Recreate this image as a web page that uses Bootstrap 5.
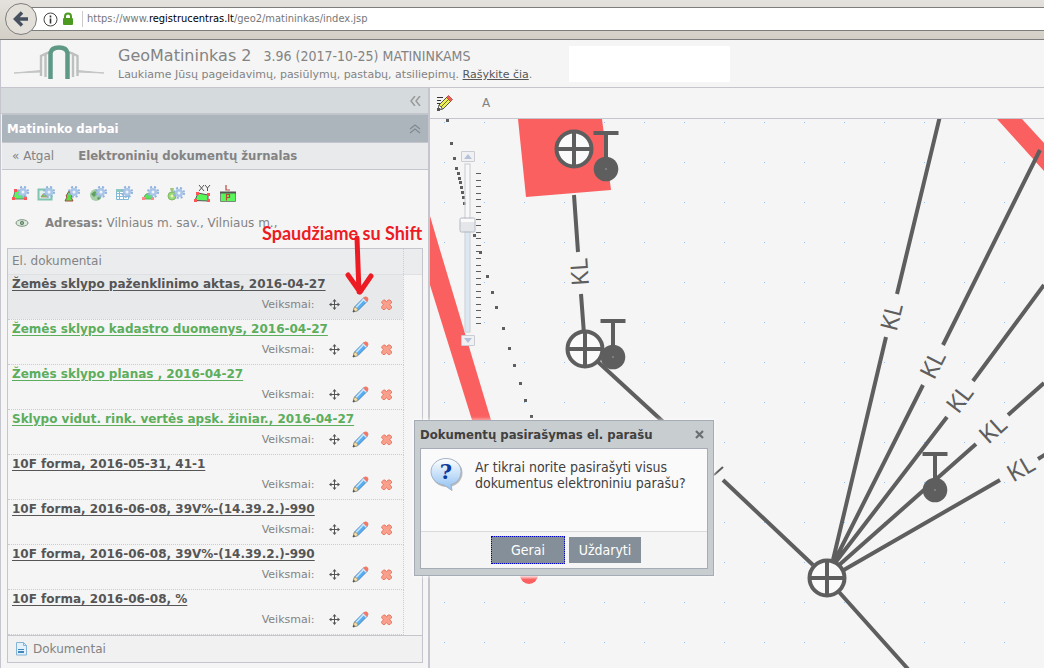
<!DOCTYPE html>
<html lang="lt">
<head>
<meta charset="utf-8">
<meta name="viewport" content="width=device-width, initial-scale=1">
<title>GeoMatininkas 2</title>
<link href="https://cdn.jsdelivr.net/npm/bootstrap@5.3.0/dist/css/bootstrap.min.css" rel="stylesheet">
<style>
body{font-family:"DejaVu Sans",sans-serif;font-size:12px;line-height:16px;color:#838383;background:#f5f5f5}
.narrow{font-family:"DejaVu Sans Condensed","DejaVu Sans",sans-serif}
.plain{background:none;border:0;padding:0;color:inherit}
.chrome{height:40px;padding-top:7px;background:linear-gradient(#e4e2dd,#d3cfc6);border-bottom:1px solid #7d7d7d}
.addr{height:24px;margin-left:30px;padding-left:12px;background:#fff;border:1px solid #7d7d7d;border-right:0}
.addr i{width:1px;height:16px;background:#ccc}
.url{font-size:11px;color:#777}
.url b{font-weight:400;color:#000}
.back{left:4px;top:2px;z-index:2}
.masthead{height:48px;border-bottom:1px solid #c5c6cd;border-left:1px solid #c5c6cd}
.logo{width:117px}
.appname{font-size:16px}
.version{font-size:14px;margin-left:12px}
.note{font-size:11px;line-height:14px}
.note a{color:#555}
.whitebox{left:569px;top:46px;width:161px;height:36px;background:#fff}
.side{width:430px;border-left:1px solid #c5c6cd;border-right:2px solid #c5c6cd}
.collapse-bar{height:26px;background:#d5dadd;border-bottom:1px solid #c5c6cd;padding-right:7px}
.paneltitle{height:28px;margin-left:1px;background:#adb5bc;border-top:1px solid #c0c5cb;color:#fff;font-size:13px;font-weight:700;padding:0 7px 0 5px}
.crumbs{height:28px;margin-left:1px;background:#e9eaec;border-top:1px solid #c5c6cd;border-bottom:1px solid #c5c6cd;padding-left:10px}
.crumbs a{color:#838383;text-decoration:none}
.crumbs b,.where b{font-size:13px}
.tools{padding:15px 0 0 6px}
.tools button{width:26px;height:18px}
.where{padding:12px 0 0 14px;height:45px}
.listing{margin:0 5px 0 6px;border:1px solid #c5c6cd}
.docs{width:100%;margin:0}
.docs th{height:25px;padding:0 4px;font-weight:400;background:#ebecee;border-bottom:1px solid #dfe0e3}
.docs td{height:45px;padding:1px 3px 0 4px;border-bottom:1px dotted #ccc;vertical-align:top}
.docs th:first-child,.docs td:first-child{border-right:1px dotted #ccc}
.docs th:last-child,.docs td:last-child{width:19px;padding:0}
.docs td:last-child{border-bottom:0}
.docs tr.on td:first-child{background:#e8e9eb}
.docs a{font-weight:700;color:#555;display:block;text-decoration:underline;text-underline-offset:2px;text-decoration-thickness:1px}
.docs tr.ok a{color:#5cad5c}
.acts{font-size:11px;padding-top:4px}
.acts button{width:26px;height:18px}
.acts .mv{width:14px;margin-left:13px;margin-right:6px}
.foot{height:27px;background:#f1f1f1;border-top:1px solid #c5c6cd;padding-left:7px}
.mapbar{height:31px;border-bottom:1px solid #c5c6cd;padding-left:6px}
.canvas svg.sheet{position:absolute;inset:0;width:100%;height:100%}
.zoomer{left:30px;top:32px;width:16px}
.zoomer button{width:14px;height:11px;border:1px solid #c9ccd3;background:#f1f1f3;border-radius:1px}
.railbox{width:16px;height:173px}
.rail{-webkit-appearance:none;appearance:none;width:169px;height:16px;left:-77px;top:78px;transform:rotate(-90deg);background:none;margin:0}
.rail::-webkit-slider-runnable-track{height:6px;border:1px solid #c9ccd3;background:linear-gradient(90deg,#dde7f1 62%,#f8f8f8 62%)}
.rail::-webkit-slider-thumb{-webkit-appearance:none;width:15px;height:16px;margin-top:-6px;border:1px solid #b0b6c0;border-radius:2px;background:linear-gradient(90deg,#e4e6e9 70%,#bbb 70%,#bbb 76%,#fafafa 76%)}
.kl text{font:24px "Noto Sans",sans-serif;fill:#5e5e5e;text-anchor:middle}
.dlg{left:414px;top:420px;width:300px;height:156px;background:#c8cdd0;border:1px solid #a5acb5;padding:0 5px 5px;z-index:5;color:#404040;box-shadow:0 0 3px 1px #fff8}
.dlg h1{font-size:13px;line-height:16px;font-weight:700;margin:0}
.dlgtop{height:27px;padding-right:4px}
.dlgin{border:1px solid #a5acb5;background:#fafafa}
.ask{height:82px}
.dlgin p{font-size:14px;line-height:16px;padding-top:10px}
.dlgbtns{height:37px;background:#f5f5f5;border-top:1px solid #d8dadc;padding-left:4px}
.dlgbtns button{height:26px;width:72px;background:#848f99;color:#fff;border:0;font-size:14px;padding:0}
.dlgbtns button.def{width:74px;height:28px;border:1px dotted #00c}
.hint{left:262px;top:222px;z-index:4;pointer-events:none;color:#ed1c24;font:700 18px/22px Lato,sans-serif;white-space:nowrap}
.hint svg{position:absolute;left:82px;top:10px}
</style>
</head>
<body class="d-flex flex-column min-vh-100 position-relative overflow-hidden">

<svg width="0" height="0" class="position-absolute">
  <defs>
    <g id="gear"><circle r="4" fill="#a9c5e8"/><circle r="5" fill="none" stroke="#8fb2de" stroke-width="2" stroke-dasharray="2 2"/><circle r="1.500" fill="#eef4fb"/></g>
    <g id="move"><path d="M5.500 1v9M1 5.500h9" stroke="#555" fill="none"/><path d="M5.500 0L7.500 2.500h-4zM5.500 11L7.500 8.500h-4zM0 5.500L2.500 3.500v4zM11 5.500L8.500 3.500v4z" fill="#555"/></g>
    <g id="pencil"><path d="M1 16l1.500-5L12 1.500l3.500 3.500L6 14.500z" fill="#58aef0" stroke="#3b74b0" stroke-width=".8"/><path d="M4 11.500L12 3" stroke="#c5e6ff" stroke-width="1.800"/><path d="M11.200 2.300L13 .5q3-.5 3.500 3l-1.800 2.200z" fill="#f07864"/><path d="M10.700 2.800l3.600 3.400" stroke="#e4e4f0" stroke-width="1.200"/><path d="M1 16l1.500-5q3 .5 3.500 3.500z" fill="#f7dfa6" stroke="#a08a60" stroke-width=".6"/><path d="M1 16l.7-2.200 1.500 1.500z" fill="#333"/></g>
    <g id="del"><path d="M1 2.500L2.500 1H4l1.500 2L7 1h2l1.500 1.500V4L8.500 5.700l2 1.800V9L9 10.500H7.200L5.500 8.500l-1.700 2H2L.7 9V7.500l2-1.800L.7 4z" fill="#f9a08c" stroke="#e9705c" stroke-width=".9"/></g>
    <pattern id="grid" x="14" y="3" width="40" height="40" patternUnits="userSpaceOnUse"><rect width="1" height="1" fill="#8fc4ff"/></pattern>
    <g id="node"><circle r="17.500" fill="#fafafa" stroke="#5e5e5e" stroke-width="4"/><path d="M0-17V17M-17 0H17" stroke="#5e5e5e" stroke-width="4"/></g>
    <g id="lamp"><path d="M-12.500-36h25" stroke="#5e5e5e" stroke-width="4"/><path d="M0-36V-8" stroke="#5e5e5e" stroke-width="4"/><circle r="12.300" fill="#5e5e5e"/><rect x="-.5" y="-.5" width="1" height="1" fill="#ddd"/></g>
    <g id="plot"><path d="M2 13L4 5l7-1 4 9z" fill="#59f65b" stroke="#777"/><path d="M1 11h3v3H1zM3 3h3v3H3zM13 11h3v3h-3z" fill="#f55"/></g>
    <linearGradient id="bub" x1="0" y1="0" x2="0" y2="1"><stop offset="0" stop-color="#fff"/><stop offset="1" stop-color="#8ec0f2"/></linearGradient>
    <linearGradient id="spot" x1="0" y1="0" x2="0" y2="1"><stop offset=".55" stop-color="#fa6060" stop-opacity=".3"/><stop offset=".75" stop-color="#fa6060"/></linearGradient>
  </defs>
</svg>

<nav class="chrome position-relative flex-shrink-0">
  <button class="plain back position-absolute" aria-label="Atgal"><svg class="d-block" width="34" height="34"><circle cx="17" cy="17" r="15.500" fill="#e3e0da" stroke="#7d7d7d"/><path d="M11 17h13M18 10.500L11.500 17l6.500 6.500" fill="none" stroke="#46505f" stroke-width="3.500"/></svg></button>
  <div class="addr d-flex align-items-center narrow">
    <svg width="15" height="15"><circle cx="7.500" cy="7.500" r="6.500" fill="none" stroke="#444"/><path d="M7.500 6.500v5M7.500 3.500v2" stroke="#333" stroke-width="1.600"/></svg>
    <svg class="ms-1" width="12" height="14"><path d="M3 7V4.500a3 3 0 0 1 6 0V7" fill="none" stroke="#4c9a1f" stroke-width="2"/><rect x="1" y="6" width="10" height="7" rx="1" fill="#4c9a1f"/></svg>
    <i class="ms-2 me-1"></i>
    <span class="url">https://www.<b>registrucentras.lt</b>/geo2/matininkas/index.jsp</span>
  </div>
</nav>

<header class="masthead d-flex flex-shrink-0">
  <svg class="logo flex-shrink-0" height="47" viewBox="1 40 117 47"><path d="M14 73l27-2.500v1.500zM104 73l-27-2.500v1.500z" fill="#c3c6c4" stroke="#c3c6c4"/><path d="M41 76V56l6-3M45.500 77V54l4-2M77.500 76V56l-6-3M73 77V54l-4-2" fill="none" stroke="#bdc0be" stroke-width="2.400"/><path d="M50.500 79V53q1-5.500 8.500-5.500t8.500 5.500v26" fill="none" stroke="#5e9986" stroke-width="4.500"/></svg>
  <div>
    <div class="d-flex align-items-baseline pt-2"><span class="appname">GeoMatininkas 2</span><span class="version narrow">3.96 (2017-10-25) MATININKAMS</span></div>
    <div class="note pt-1">Laukiame Jūsų pageidavimų, pasiūlymų, pastabų, atsiliepimų. <a href="#">Rašykite čia</a>.</div>
  </div>
</header>
<div class="whitebox position-absolute"></div>

<main class="d-flex flex-grow-1">
  <aside class="side flex-shrink-0">
    <div class="collapse-bar d-flex align-items-center justify-content-end"><button class="plain" aria-label="Suskleisti"><svg class="d-block" width="11" height="10"><path d="M5 0L1 5l4 5M10 0L6 5l4 5" fill="none" stroke="#999" stroke-width="1.500"/></svg></button></div>
    <div class="paneltitle narrow d-flex align-items-center justify-content-between">Matininko darbai<button class="plain" aria-label="Sutraukti"><svg class="d-block" width="12" height="10"><path d="M1 5l5-4 5 4M1 9l5-4 5 4" fill="none" stroke="#808890" stroke-width="1.200"/></svg></button></div>
    <div class="crumbs d-flex align-items-center"><a href="#">« Atgal</a><b class="narrow ms-4">Elektroninių dokumentų žurnalas</b></div>
    <div class="tools d-flex">
      <button class="plain" aria-label="Sklypas"><svg width="18" height="16"><use href="#plot"/><use href="#gear" x="12" y="6"/></svg></button>
      <button class="plain" aria-label="Vaizdas"><svg width="18" height="16"><path d="M1.500 3.500h13v10h-13z" fill="#e0f3ec" stroke="#82c4b2" stroke-width="2"/><path d="M4 11q3-7 7 0z" fill="#5bdc5b" stroke="#d66" stroke-width=".7"/><use href="#gear" x="12" y="6"/></svg></button>
      <button class="plain" aria-label="Riboženklis"><svg width="18" height="16"><path d="M6 5l3 5-1 1 2 4H2l2-4-1-1z" fill="#5bdc4b" stroke="#a04a3a"/><use href="#gear" x="11" y="6"/></svg></button>
      <button class="plain" aria-label="Gaublys"><svg width="18" height="16"><circle cx="7" cy="9" r="6" fill="#a7cfa8"/><path d="M2 8l4-3 2 3-3 3zM8 12l3-2 1 2-3 2z" fill="#5fa05f"/><use href="#gear" x="12" y="6"/></svg></button>
      <button class="plain" aria-label="Lentelė"><svg width="18" height="16"><path d="M1.500 4.500h12v9h-12zM1 7.500h13M1 10.500h13M4.500 4v10M8.500 4v10" fill="#fff" stroke="#82b9d6"/><path d="M1 3h13v3H1z" fill="#8fc8c0"/><use href="#gear" x="12" y="6"/></svg></button>
      <button class="plain" aria-label="Plotas"><svg width="18" height="16"><path d="M2 13q2-6 6-6 3 1 4 6z" fill="#59e65b" stroke="#6a6"/><path d="M1 11h3v3H1zM10 11h3v3h-3z" fill="#f88"/><use href="#gear" x="12" y="6"/></svg></button>
      <button class="plain" aria-label="Vertė"><svg width="18" height="16"><circle cx="5" cy="10" r="4" fill="#9bd87a" stroke="#7fb868"/><path d="M3 2h4l-1 4H4z" fill="#9bc87a"/><circle cx="5" cy="10" r="1.500" fill="#e8f7a0"/><use href="#gear" x="12" y="7"/></svg></button>
      <button class="plain" aria-label="XY"><svg width="18" height="18" overflow="visible"><path d="M2 15.500L5 8l10 2v6z" fill="#59f65b" stroke="#555"/><path d="M1 14h3v3H1zM3 7h3v3H3zM14 8h3v3h-3zM14 14h3v3h-3z" fill="#f55"/><path d="M6 0l5 6M11 0L6 6M12 0l2.500 3L17 0M14.500 3v3" fill="none" stroke="#555"/></svg></button>
      <button class="plain" aria-label="LP"><svg width="18" height="18"><path d="M1.500 7.500h15v9h-15z" fill="#59f65b" stroke="#7a8a7a"/><path d="M1 7.500h16" stroke="#555" stroke-width="2"/><path d="M7 0v5h4M7.500 15.500V9.500h3v3h-3" fill="none" stroke="#b84a3a" stroke-width="1.200"/></svg></button>
    </div>
    <div class="where d-flex"><svg class="me-3 mt-1" width="14" height="8"><ellipse cx="7" cy="4" rx="6" ry="3.300" fill="#dde9de" stroke="#7d917f"/><circle cx="7" cy="4" r="2" fill="#4f7a54"/><circle cx="7" cy="4" r=".7" fill="#fff"/></svg><span><b class="narrow">Adresas:</b> Vilniaus m. sav., Vilniaus m.,</span></div>
    <div class="listing">
      <table class="docs"><thead><tr><th scope="col">El. dokumentai</th><th></th></tr></thead><tbody id="rows"></tbody></table>
      <div class="foot d-flex align-items-center"><svg width="14" height="14"><path d="M1.500.5h7l3 3v9.500h-10z" fill="#e4f1fa" stroke="#84b5d6"/><path d="M8.500.5v3h3" fill="none" stroke="#84b5d6"/><path d="M3 7h6v1H3zM3 9h6v2H3z" fill="#3f87bd"/></svg><span class="ms-1">Dokumentai</span></div>
    </div>
  </aside>

  <section class="flex-grow-1 d-flex flex-column">
    <div class="mapbar d-flex align-items-center">
      <button class="plain" aria-label="Redaguoti"><svg class="d-block" width="18" height="16"><path d="M1 2.500h6M1 5.500h4M1 8.500h3" stroke="#333"/><path d="M2 15l1-5 8-8 4 4-8 8z" fill="#edf052" stroke="#555"/><path d="M5 12l8-8" stroke="#77702a"/><path d="M10.500 2.500l2-2 4 4-2 2z" fill="#f25c5c" stroke="#933" stroke-width=".7"/><path d="M2 15l1-5 3.500 3.500z" fill="#fff" stroke="#666"/><path d="M1 13h3v3H1z" fill="#555"/></svg></button>
      <button class="plain ms-4 ps-1">A</button>
    </div>
    <div class="canvas position-relative flex-grow-1 overflow-hidden">
      <svg class="sheet" role="img" aria-label="Žemėlapis">
        <rect width="100%" height="100%" fill="url(#grid)"/>
        <g transform="translate(-430 -119)">
          <path d="M518 119h84l9 71-85 7zM430 216l10 34 51 170h-19L430 285zM997 119h25l22 24v28z" fill="#fa6060"/>
          <circle cx="529" cy="575" r="9" fill="url(#spot)"/>
          <g id="dots" fill="#5e5e5e"></g>
          <path d="M574 195l4 57M581 294l3 40M597 361l112 103M723 480l90 85M839 592l69 77M833 560l53-223M897 294l43-178M834 562l89-177M943 345l97-195M835 563l112-146M973 381l71-96M838 566l138-122M1008 415l36-32M842 571l158-91M1038 459l8-5" fill="none" stroke="#5e5e5e" stroke-width="4"/>
          <path d="M714 475l9-8" stroke="#5e5e5e" stroke-width="2"/>
          <g class="kl">
            <text transform="translate(580 272) rotate(-94)" y="8">KL</text>
            <text transform="translate(892 317) rotate(-76)" y="8">KL</text>
            <text transform="translate(933 365) rotate(-63)" y="8">KL</text>
            <text transform="translate(960 399) rotate(-53)" y="8">KL</text>
            <text transform="translate(993 430) rotate(-42)" y="8">KL</text>
            <text transform="translate(1021 469) rotate(-30)" y="8">KL</text>
          </g>
          <use href="#node" x="574" y="149"/><use href="#node" x="585" y="349"/><use href="#node" x="827" y="578"/>
          <use href="#lamp" x="606" y="169"/><use href="#lamp" x="613" y="357"/><use href="#lamp" x="935" y="490"/>
          <g id="ticks" stroke="#5e5e5e"></g>
        </g>
      </svg>
      <div class="zoomer position-absolute d-flex flex-column align-items-center">
        <button class="plain d-flex align-items-center justify-content-center" aria-label="Artinti"><svg width="8" height="5"><path d="M4 0l4 5H0z" fill="#b5c3da"/></svg></button>
        <div class="railbox position-relative"><input class="rail position-absolute" type="range" min="0" max="100" value="65" aria-label="Mastelis"></div>
        <button class="plain d-flex align-items-center justify-content-center" aria-label="Tolinti"><svg width="8" height="5"><path d="M0 0h8L4 5z" fill="#b5c3da"/></svg></button>
      </div>
    </div>
  </section>
</main>

<div class="hint position-absolute">Spaudžiame su Shift<svg width="32" height="64"><path d="M13 6l2 54M4 43l12 17L27 44" fill="none" stroke="#ed1c24" stroke-width="5" stroke-linecap="round" stroke-linejoin="round"/></svg></div>

<div class="dlg position-absolute" role="dialog" aria-labelledby="dt">
  <div class="dlgtop d-flex align-items-center justify-content-between"><h1 class="narrow" id="dt">Dokumentų pasirašymas el. parašu</h1><button class="plain" aria-label="Uždaryti langą"><svg class="d-block" width="9" height="9"><path d="M1 1l7 7M8 1L1 8" stroke="#6b6f73" stroke-width="2.200"/></svg></button></div>
  <div class="dlgin">
    <div class="ask d-flex">
      <svg class="flex-shrink-0 ms-2 mt-2" width="34" height="36"><ellipse cx="18" cy="16" rx="15.500" ry="14" fill="#bbb"/><path d="M17 1.500c9 0 15 6 15 13s-5 12-10 13l1 6-8-5.500C7 27 2 21 2 14.500s6-13 15-13z" fill="url(#bub)" stroke="#a3b3c6"/><text x="17" y="22" text-anchor="middle" font-family="DejaVu Serif, serif" font-size="21" font-weight="700" fill="#0b3a9c">?</text></svg>
      <p class="narrow m-0 ps-2 ms-1">Ar tikrai norite pasirašyti visus<br>dokumentus elektroniniu parašu?</p>
    </div>
    <div class="dlgbtns d-flex align-items-center justify-content-center gap-1"><button class="def narrow">Gerai</button><button class="narrow">Uždaryti</button></div>
  </div>
</div>

<script src="https://cdn.jsdelivr.net/npm/bootstrap@5.3.0/dist/js/bootstrap.bundle.min.js"></script>
<script>
const docs=[["Žemės sklypo paženklinimo aktas, 2016-04-27","on"],["Žemės sklypo kadastro duomenys, 2016-04-27","ok"],["Žemės sklypo planas , 2016-04-27","ok"],["Sklypo vidut. rink. vertės apsk. žiniar., 2016-04-27","ok"],["10F forma, 2016-05-31, 41-1",""],["10F forma, 2016-06-08, 39V%-(14.39.2.)-990",""],["10F forma, 2016-06-08, 39V%-(14.39.2.)-990",""],["10F forma, 2016-06-08, %",""]];
document.getElementById('rows').innerHTML=docs.map(([t,c])=>`<tr class="${c}"><td><a href="#">${t}</a><div class="acts d-flex align-items-center justify-content-end">Veiksmai:<button class="plain mv" aria-label="Perkelti"><svg class="d-block mx-auto" width="11" height="11"><use href="#move"/></svg></button><button class="plain" aria-label="Redaguoti"><svg class="d-block mx-auto" width="17" height="17"><use href="#pencil"/></svg></button><button class="plain" aria-label="Šalinti"><svg class="d-block mx-auto" width="12" height="12"><use href="#del"/></svg></button></div></td><td></td></tr>`).join('');
const pts=[[447,120],[451,143],[454,158],[456,168],[458,173],[459,178],[460,182],[461,187],[462,192],[463,197],[464,203],[474,235],[480,252],[487,276],[492,292],[496,307],[503,328],[509,348],[514,365],[520,383],[525,400],[531,416]];
document.getElementById('dots').innerHTML=pts.map(([x,y])=>`<rect x="${x-1}" y="${y-1}" width="3" height="3"/>`).join('');
let t='';for(let i=0;i<24;i++){const y=Math.round(173+i*6.54)+.5;t+=`<path d="M476 ${y}h5"/>`}
document.getElementById('ticks').innerHTML=t;
</script>
</body>
</html>
